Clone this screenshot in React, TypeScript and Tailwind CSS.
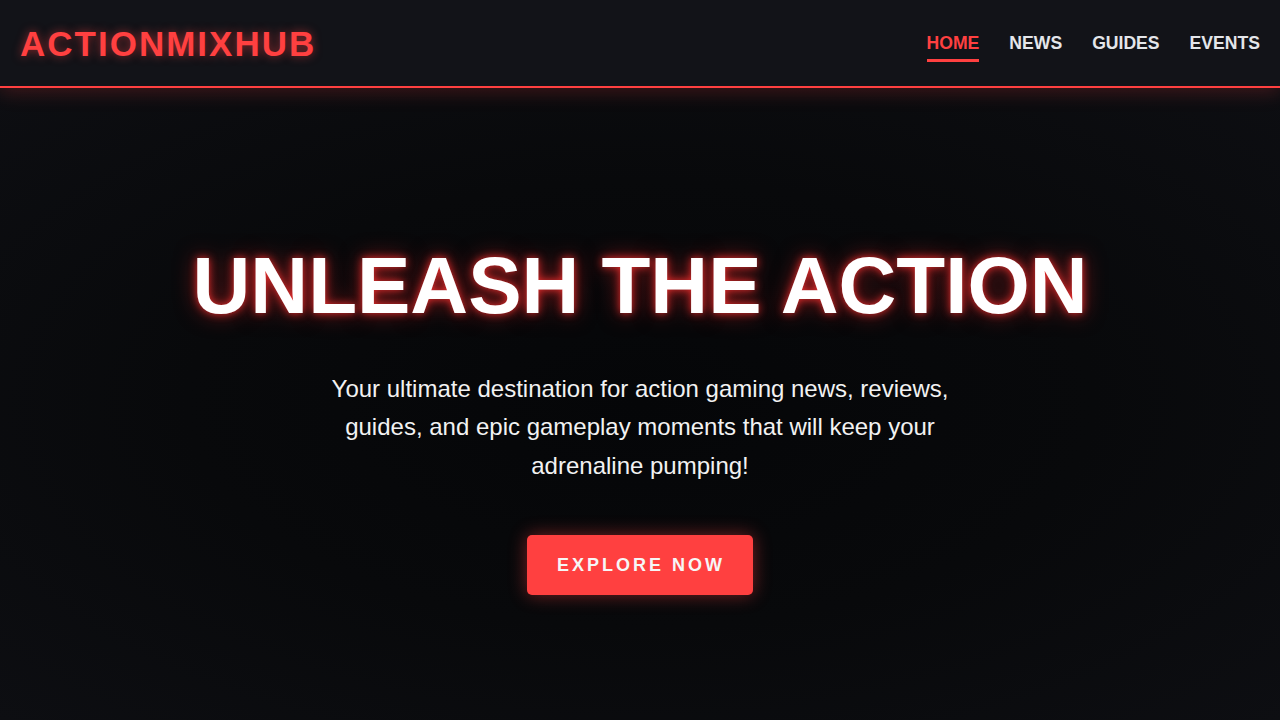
const navItems = ['HOME', 'NEWS', 'GUIDES', 'EVENTS'];

export default function App() {
  return (
    <div className="min-h-screen bg-[#0b0c10] font-['Liberation_Sans',Arial,sans-serif] text-white">
      <header className="relative z-10 flex h-[88px] items-center justify-between border-b-2 border-[#ff4040] bg-[#121318] pl-5 pr-5 shadow-[0_4px_18px_rgba(255,64,64,0.22)]">
        <h1 className="text-[35px] font-bold leading-none tracking-[2px] text-[#ff4040] [text-shadow:0_0_10px_rgba(255,64,64,0.55)]">
          ACTIONMIXHUB
        </h1>
        <nav className="flex items-center gap-[30px]">
          {navItems.map((item, i) => (
            <a
              key={item}
              href="#"
              className={`relative pt-[2px] text-[17.6px] font-bold leading-none ${
                i === 0 ? 'text-[#ff4040]' : 'text-[#e4e6ea]'
              }`}
            >
              {item}
              {i === 0 && <span className="absolute left-0 right-0 top-[26px] h-[3px] bg-[#ff4040]" />}
            </a>
          ))}
        </nav>
      </header>

      <main className="flex min-h-[632px] flex-col items-center bg-[radial-gradient(ellipse_at_center,#050608_0%,#08090b_50%,#0d0e12_100%)] pt-[150px] text-center">
        <h2 className="text-[80px] font-bold leading-[1.2] text-white [text-shadow:0_0_8px_rgba(255,50,50,0.9),0_0_22px_rgba(255,40,40,0.5)]">
          UNLEASH THE ACTION
        </h2>
        <p className="mt-[36px] max-w-[650px] text-[24px] leading-[1.6] text-[#f2f2f2]">
          Your ultimate destination for action gaming news, reviews, guides, and epic gameplay moments that will keep your adrenaline pumping!
        </p>
        <button className="mt-[50px] rounded-[5px] bg-[#ff4040] py-5 pl-[30px] pr-[28px] text-[18px] font-bold leading-[20px] tracking-[3px] text-[#f6f6f6] shadow-[0_0_18px_rgba(255,64,64,0.45)]">
          EXPLORE NOW
        </button>
      </main>
    </div>
  );
}
